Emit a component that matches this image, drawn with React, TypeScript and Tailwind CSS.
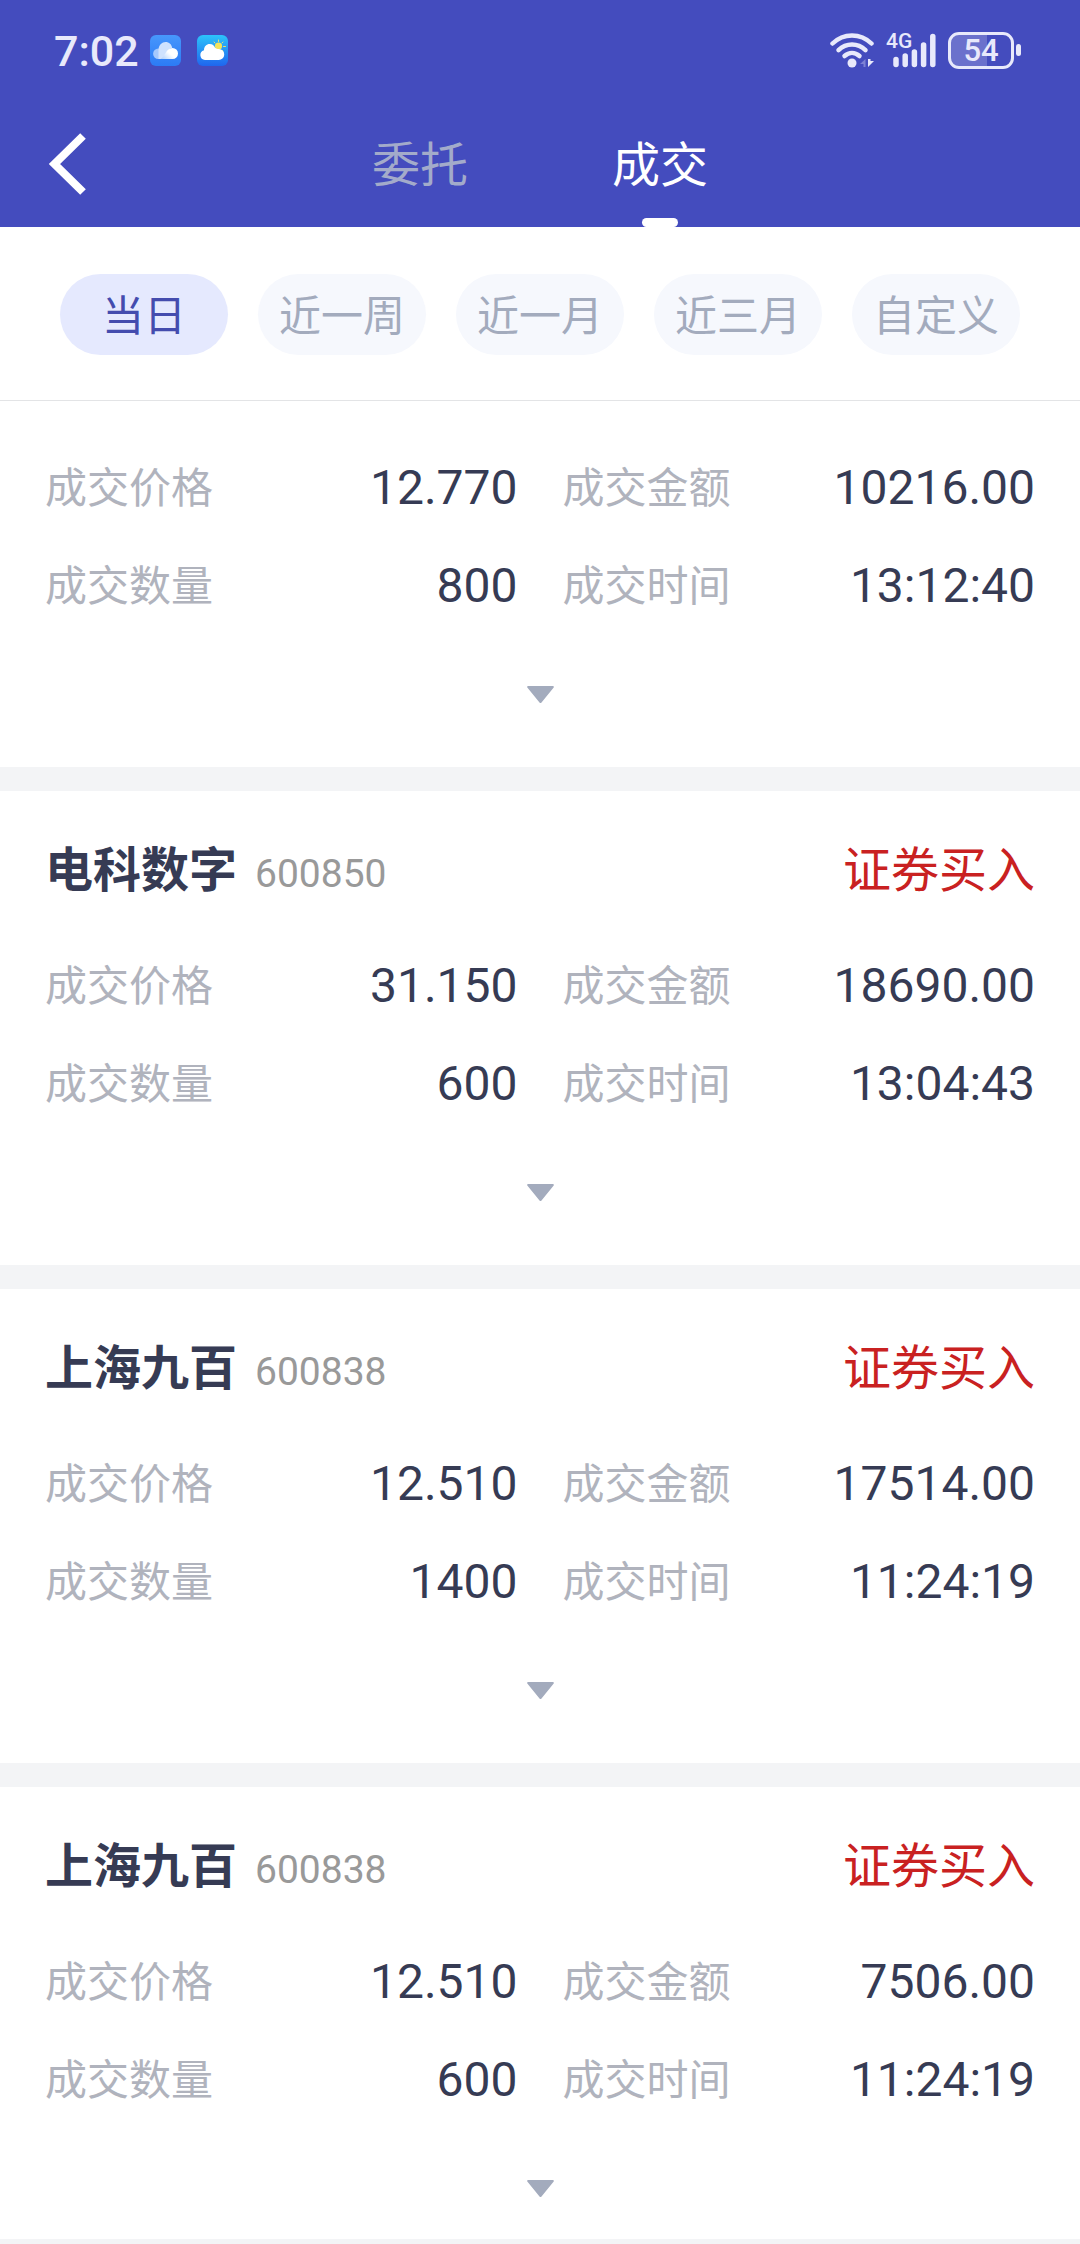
import { useState } from "react";

type Trade = {
  name?: string;
  code?: string;
  side?: string;
  price: string;
  amount: string;
  quantity: string;
  time: string;
};

const trades: Trade[] = [
  { price: "12.770", amount: "10216.00", quantity: "800", time: "13:12:40" },
  { name: "电科数字", code: "600850", side: "证券买入", price: "31.150", amount: "18690.00", quantity: "600", time: "13:04:43" },
  { name: "上海九百", code: "600838", side: "证券买入", price: "12.510", amount: "17514.00", quantity: "1400", time: "11:24:19" },
  { name: "上海九百", code: "600838", side: "证券买入", price: "12.510", amount: "7506.00", quantity: "600", time: "11:24:19" },
];

const ranges = ["当日", "近一周", "近一月", "近三月", "自定义"];
const tabs = ["委托", "成交"];

function CloudIcon() {
  return (
    <svg className="size-[31px]" viewBox="0 0 31 31" aria-hidden="true">
      <defs>
        <linearGradient id="cloudBg" x1="0" y1="0" x2="0" y2="1">
          <stop offset="0" stopColor="#4797fc" />
          <stop offset="1" stopColor="#2c7bf5" />
        </linearGradient>
        <linearGradient id="cloudFront" x1="0" y1="1" x2="1" y2="0.3">
          <stop offset="0" stopColor="#a9cdfd" />
          <stop offset="0.6" stopColor="#ffffff" />
        </linearGradient>
      </defs>
      <rect width="31" height="31" rx="6" fill="url(#cloudBg)" />
      <circle cx="8.3" cy="18.8" r="5.2" fill="#a4c9fd" />
      <path d="M8.5 14.5C9 9.800 12 7 15.500 7c3.600 0 6.300 2.600 6.700 6C18 14 16 20 12.500 24H8.500z" fill="#cfe2fe" />
      <path d="M10.500 24c4-1.500 5.500-11 12-11a5.500 5.500 0 0 1 0 11z" fill="url(#cloudFront)" />
    </svg>
  );
}

function WeatherIcon() {
  return (
    <svg className="size-[31px]" viewBox="0 0 31 31" aria-hidden="true">
      <defs>
        <linearGradient id="weatherBg" x1="0" y1="0" x2="0" y2="1">
          <stop offset="0" stopColor="#2cc3fb" />
          <stop offset="1" stopColor="#1f66ee" />
        </linearGradient>
      </defs>
      <rect width="31" height="31" rx="6" fill="url(#weatherBg)" />
      <circle cx="21.500" cy="11" r="3.600" fill="#f3e35d" />
      <path d="M21.500 5v1.500M17 7l1 1M26 7l-1 1M26.500 11.500H28.500M25 15.200l1 1" stroke="#e6e173" strokeWidth="1" strokeLinecap="round" />
      <path d="M8 25a5 5 0 0 1-1-9.800C7 11.500 9.500 9 12.700 9c2.700 0 4.500 1.500 5.400 3.800 1.200.8 2 1.200 3.900 1.200a5.300 5.300 0 0 1-.5 11z" fill="#fff" />
    </svg>
  );
}

function WifiIcon() {
  return (
    <svg className="h-[35px] w-[44px]" viewBox="0 0 44 35" fill="none" aria-hidden="true">
      <g stroke="#e8e9fb" strokeWidth="4.500" strokeLinecap="round">
        <path d="M2.500 10.500C13.500-.3 30.500-.3 41.500 10.500" />
        <path d="M8.500 17.200c7.800-7.600 19.200-7.600 27 0" />
        <path d="M14.500 23c4.500-4 10.500-4 15 0" />
      </g>
      <circle cx="22" cy="30" r="4.500" fill="#e8e9fb" />
      <path d="M30 31l5.500-5v8h-2v-3z" fill="#7d82d4" />
      <path d="M38 26v8l6-6h-3.500V26z" fill="#e8e9fb" />
    </svg>
  );
}

function SignalIcon() {
  return (
    <div className="relative">
      <span className="absolute -top-1 left-0 text-[21px] leading-[24px] font-medium">4G</span>
      <svg className="h-[35px] w-[50px]" viewBox="0 0 50 35" aria-hidden="true">
        <g stroke="#e8e9fb" strokeWidth="5.500" strokeLinecap="round">
          <path d="M10 26.500V31.500M19.200 23V31.500M28.400 19V31.500M37.600 12V31.500M46.800 3.500V31.500" />
        </g>
      </svg>
    </div>
  );
}

function StatusBar() {
  return (
    <div className="flex h-[100px] items-center justify-between pl-[54px] pr-[59px] text-[#e8e9fb]">
      <div className="flex items-center">
        <span className="pt-[2px] text-[43px] leading-[60px] font-medium">7:02</span>
        <span className="ml-[11px] flex gap-4">
          <CloudIcon />
          <WeatherIcon />
        </span>
      </div>
      <div className="flex items-center gap-3">
        <WifiIcon />
        <SignalIcon />
        <span className="flex items-center gap-[2px]">
          <span className="flex h-[37px] w-[66px] items-center justify-center rounded-[11px] border-[3px] border-[#e8e9fb] bg-linear-to-r from-[#6b71cc] from-60% to-transparent to-60% pt-[2px] text-[31px] font-medium">
            54
          </span>
          <span className="h-3 w-[5px] rounded-full bg-[#e8e9fb]" />
        </span>
      </div>
    </div>
  );
}

function Field({ label, value }: { label: string; value: string }) {
  return (
    <div className="flex h-[98px] flex-1 items-center justify-between">
      <dt className="text-[42px] text-[#b0b3bd]">{label}</dt>
      <dd className="text-[48px] text-[#363b54]">{value}</dd>
    </div>
  );
}

function TradeCard({ trade }: { trade: Trade }) {
  return (
    <li className="bg-white px-[45px] pb-[25px] last:pb-[3px]">
      {trade.name && (
        <div className="flex h-[108px] items-baseline pt-[50px] leading-[60px]">
          <h2 className="text-[48px] font-bold text-[#363b54]">{trade.name}</h2>
          <span className="ml-[18px] text-[39px] text-[#999999]">{trade.code}</span>
          <span className="ml-auto text-[48px] text-[#c92121]">{trade.side}</span>
        </div>
      )}
      <dl className="pt-[38px]">
        <div className="flex gap-[45px]">
          <Field label="成交价格" value={trade.price} />
          <Field label="成交金额" value={trade.amount} />
        </div>
        <div className="flex gap-[45px]">
          <Field label="成交数量" value={trade.quantity} />
          <Field label="成交时间" value={trade.time} />
        </div>
      </dl>
      <button type="button" aria-label="展开" className="mx-auto mt-[11px] flex h-24 w-48 items-center justify-center">
        <svg className="h-[17px] w-[27px]" viewBox="0 0 27 17" aria-hidden="true">
          <path d="M1.300 0h24.400c1 0 1.500 1 .8 1.800L14.500 16.400q-1 1.100-2 0L.5 1.800C-.2 1 .3 0 1.300 0z" fill="#a3abbd" />
        </svg>
      </button>
    </li>
  );
}

export default function App() {
  const [tab, setTab] = useState("成交");
  const [range, setRange] = useState("当日");

  return (
    <div className="min-h-screen bg-[#f3f4f6] font-['Roboto','Noto_Sans_CJK_SC',sans-serif]">
      <header className="bg-[#444cbe]">
        <StatusBar />
        <nav className="grid h-[127px] grid-cols-[1fr_auto_1fr] items-center">
          <button type="button" aria-label="返回" className="ml-12 w-16">
            <svg className="h-[62px] w-[38px]" viewBox="0 0 38 62" fill="none" aria-hidden="true">
              <path d="M35 3 6.500 31 35 59" stroke="#fff" strokeWidth="8" />
            </svg>
          </button>
          <div className="flex h-full">
            {tabs.map((t) => (
              <button
                key={t}
                type="button"
                onClick={() => setTab(t)}
                aria-pressed={tab === t}
                className={`relative flex w-60 items-center justify-center pt-1 text-[48px] ${tab === t ? "text-white" : "text-[#a3abca]"}`}
              >
                {t}
                {tab === t && <span className="absolute bottom-0 left-1/2 h-[9px] w-9 -translate-x-1/2 rounded-full bg-white" />}
              </button>
            ))}
          </div>
        </nav>
      </header>

      <div className="flex gap-[30px] border-b border-[#e3e4e6] bg-white px-[60px] pt-[47px] pb-[45px]">
        {ranges.map((r) => (
          <button
            key={r}
            type="button"
            onClick={() => setRange(r)}
            aria-pressed={range === r}
            className={`h-[81px] flex-1 rounded-full pt-1 text-[42px] ${range === r ? "bg-[#e5e9fe] text-[#444cae]" : "bg-[#f6f8fd] text-[#a3abbd]"}`}
          >
            {r}
          </button>
        ))}
      </div>

      <ul className="flex flex-col gap-6">
        {trades.map((trade, i) => (
          <TradeCard key={i} trade={trade} />
        ))}
      </ul>
    </div>
  );
}
